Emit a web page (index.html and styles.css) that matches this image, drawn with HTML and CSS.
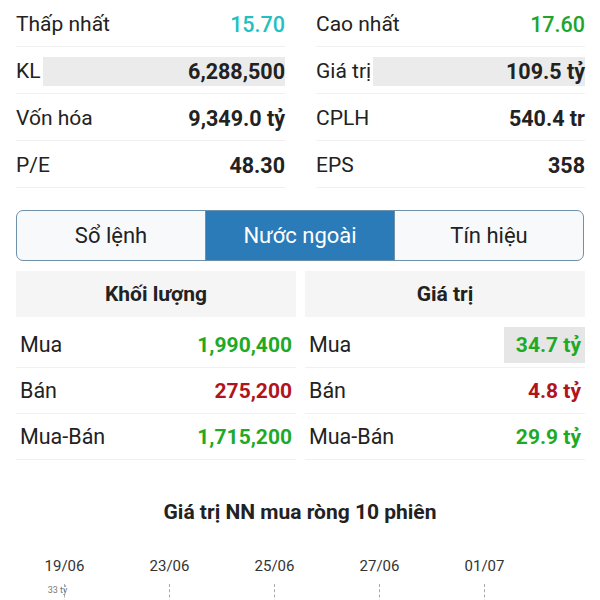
FILE: index.html
```html
<!DOCTYPE html>
<html lang="vi">
<head>
  <meta charset="UTF-8">
  <meta name="viewport" content="width=device-width, initial-scale=1.0">
  <title>Nước ngoài</title>
  <link rel="stylesheet" href="styles.css">
</head>
<body>

  <!-- Price summary -->
  <div class="summary">
    <div class="summary-col">
      <div class="stat-row"><span class="label">Thấp nhất</span><span class="value low">15.70</span></div>
      <div class="stat-row"><span class="label">KL</span><span class="value shaded">6,288,500</span></div>
      <div class="stat-row"><span class="label">Vốn hóa</span><span class="value">9,349.0 tỷ</span></div>
      <div class="stat-row"><span class="label">P/E</span><span class="value">48.30</span></div>
    </div>
    <div class="summary-col">
      <div class="stat-row"><span class="label">Cao nhất</span><span class="value high">17.60</span></div>
      <div class="stat-row"><span class="label">Giá trị</span><span class="value shaded">109.5 tỷ</span></div>
      <div class="stat-row"><span class="label">CPLH</span><span class="value">540.4 tr</span></div>
      <div class="stat-row"><span class="label">EPS</span><span class="value">358</span></div>
    </div>
  </div>

  <!-- Tabs -->
  <div class="tabs">
    <div class="tab">Sổ lệnh</div>
    <div class="tab active">Nước ngoài</div>
    <div class="tab">Tín hiệu</div>
  </div>

  <!-- Foreign trading tables -->
  <div class="foreign">
    <div class="foreign-table">
      <div class="foreign-head">Khối lượng</div>
      <div class="foreign-row"><span class="label">Mua</span><span class="value up">1,990,400</span></div>
      <div class="foreign-row"><span class="label">Bán</span><span class="value down">275,200</span></div>
      <div class="foreign-row"><span class="label">Mua-Bán</span><span class="value up">1,715,200</span></div>
    </div>
    <div class="foreign-table">
      <div class="foreign-head">Giá trị</div>
      <div class="foreign-row"><span class="label">Mua</span><span class="value up pressed">34.7 tỷ</span></div>
      <div class="foreign-row"><span class="label">Bán</span><span class="value down">4.8 tỷ</span></div>
      <div class="foreign-row"><span class="label">Mua-Bán</span><span class="value up">29.9 tỷ</span></div>
    </div>
  </div>

  <!-- Chart -->
  <div class="chart">
    <h3 class="chart-title">Giá trị NN mua ròng 10 phiên</h3>
    <div class="axis">
      <div class="axis-item"><span>19/06</span><i class="tick"></i><small class="bar-label">33 tỷ</small></div>
      <div class="axis-item"><span>23/06</span><i class="tick"></i></div>
      <div class="axis-item"><span>25/06</span><i class="tick"></i></div>
      <div class="axis-item"><span>27/06</span><i class="tick"></i></div>
      <div class="axis-item"><span>01/07</span><i class="tick"></i></div>
    </div>
  </div>

</body>
</html>
```

FILE: styles.css
```css
body {
  margin: 0;
  background: #fff;
  font-family: 'Roboto', 'Noto Sans', sans-serif;
  color: #222;
  overflow: hidden;
}

/* Summary grid */
.summary {
  display: grid;
  grid-template-columns: 269px 269px;
  column-gap: 31px;
  padding: 0 15px 0 16px;
}

.stat-row {
  display: flex;
  align-items: center;
  height: 44px;
  padding-top: 2px;
  border-bottom: 1px solid #f0f0f0;
  font-size: 21px;
}

.stat-row .label {
  flex: none;
  padding-right: 2px;
}

.stat-row .value {
  flex: 1;
  text-align: right;
  font-weight: bold;
  font-size: 21.5px;
  line-height: 29px;
}

.stat-row .value.shaded {
  background: #ebebeb;
}

.value.low {
  color: #22c0c0;
  font-weight: 500;
}

.value.high {
  color: #20a52a;
  font-weight: 500;
}

/* Tabs */
.tabs {
  display: flex;
  margin: 22px 16px 0 16px;
  height: 49px;
  border: 1.5px solid #6e90a8;
  border-radius: 7px;
  overflow: hidden;
  background: #f8f9fb;
}

.tab {
  flex: 1;
  display: flex;
  align-items: center;
  justify-content: center;
  font-size: 22px;
  color: #222;
}

.tab.active {
  background: #2b7bb8;
  color: #fff;
  border-left: 1px solid #6e90a8;
  border-right: 1px solid #6e90a8;
}

/* Foreign tables */
.foreign {
  display: flex;
  gap: 9px;
  padding: 10px 15px 0 16px;
}

.foreign-table {
  flex: 1;
}

.foreign-head {
  height: 46px;
  line-height: 47px;
  background: #f5f5f5;
  text-align: center;
  font-size: 21px;
  font-weight: bold;
  margin-bottom: 5px;
}

.foreign-row {
  display: flex;
  align-items: center;
  justify-content: space-between;
  height: 45px;
  border-bottom: 1px solid #f0f0f0;
  padding: 0 4px;
  font-size: 21.5px;
}

.foreign-row .value {
  font-weight: bold;
  font-size: 21px;
  padding: 6px 0 6px 12px;
}

.value.up {
  color: #1faa26;
}

.value.down {
  color: #b0141c;
}

.value.pressed {
  background: #e6e6e6;
  margin-right: -4px;
  padding-right: 4px;
}

/* Chart */
.chart {
  padding-top: 40px;
}

.chart-title {
  margin: 0;
  text-align: center;
  font-size: 21px;
  font-weight: bold;
  color: #222;
}

.axis {
  display: flex;
  padding: 33px 0 0 12px;
}

.axis-item {
  width: 105px;
  display: flex;
  flex-direction: column;
  align-items: center;
  font-size: 15px;
  color: #333;
}

.tick {
  display: block;
  height: 24px;
  margin-top: 9px;
  border-left: 1px dashed #aaa;
}

.bar-label {
  position: absolute;
  margin-top: 28px;
  margin-left: -14px;
  font-size: 9px;
  color: #777;
}
```
